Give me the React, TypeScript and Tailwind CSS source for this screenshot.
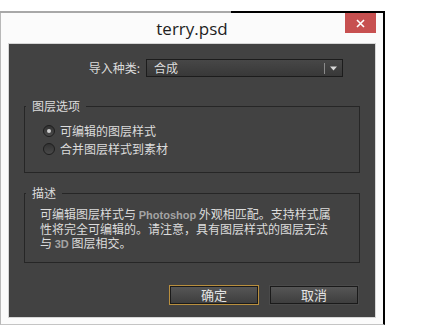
export default function App() {
  const cjk = { fontFamily: '"Noto Sans CJK SC", "Noto Sans", sans-serif' };

  return (
    <div className="w-[446px] h-[336px] bg-white pt-[11px]">
      <div className="w-[385px] flex flex-col">
        <div className="flex h-[2px]">
          <div className="w-[231px] bg-[#a8a8a8]" />
          <div className="flex-1 bg-black" />
        </div>
        <div className="border-l border-l-[#b8b8b8] border-r-2 border-r-black border-b border-b-[#c4c4c4] bg-[#fbfbfb] px-[7px] pb-[6px]">
          {/* title bar */}
          <div className="grid grid-cols-[31px_1fr_31px] h-[30px]">
            <div />
            <div
              className="text-center text-[17px] leading-[22px] pt-[5px] text-[#1e1e1e]"
              style={{ fontFamily: '"Open Sans", "Noto Sans", sans-serif' }}
            >
              terry.psd
            </div>
            <div className="h-[20px] bg-[#c75050] flex items-center justify-center">
              <svg width="9" height="9" viewBox="0 0 9 9">
                <path d="M1 1L8 8M8 1L1 8" stroke="white" strokeWidth="1.6" />
              </svg>
            </div>
          </div>

          {/* panel */}
          <div
            className="h-[275px] bg-[#424242] border border-[#d6d6d6] px-[15px] pt-[15px] text-[12px] text-[#dcdcdc]"
            style={cjk}
          >
            <div className="flex items-center h-[18px]">
              <div className="w-[116px] text-right leading-[18px]">导入种类:</div>
              <div className="ml-[6px] w-[197px] h-[18px] border border-[#1c1c1c] bg-gradient-to-b from-[#474747] to-[#383838] flex items-center">
                <span className="pl-[7px] flex-1 leading-[16px]">合成</span>
                <div className="w-px h-[11px] bg-[#8a8a8a]" />
                <svg width="17" height="16" viewBox="0 0 17 16">
                  <path d="M5 6.5H12L8.5 10.5Z" fill="#d8d8d8" />
                </svg>
              </div>
            </div>

            <fieldset className="mt-[22px] h-[74px] border border-[#262626] px-px">
              <legend className="px-[6px] leading-[14px]">图层选项</legend>
              <div className="pl-[17px] pt-[9px]">
                <div className="flex items-center h-[18px] gap-[5px]">
                  <Radio checked />
                  <span>可编辑的图层样式</span>
                </div>
                <div className="flex items-center h-[18px] gap-[5px]">
                  <Radio />
                  <span>合并图层样式到素材</span>
                </div>
              </div>
            </fieldset>

            <fieldset className="mt-[13px] h-[77px] border border-[#262626] px-px">
              <legend className="px-[6px] leading-[14px]">描述</legend>
              <div className="pl-[14px] pt-[7px] leading-[14px]">
                可编辑图层样式与{" "}
                <span
                  className="text-[11px] font-bold text-[#a4a4a4]"
                  style={{ fontFamily: '"Liberation Sans", sans-serif' }}
                >
                  Photoshop
                </span>{" "}
                外观相匹配。支持样式属
                <br />
                性将完全可编辑的。请注意，具有图层样式的图层无法
                <br />
                与{" "}
                <span
                  className="text-[11px] font-bold text-[#a4a4a4]"
                  style={{ fontFamily: '"Liberation Sans", sans-serif' }}
                >
                  3D
                </span>{" "}
                图层相交。
              </div>
            </fieldset>

            <div className="mt-[22px] flex justify-end gap-[10px] pr-px">
              <button
                type="button"
                className="w-[90px] h-[20px] border border-[#b98f3e] shadow-[inset_0_0_0_1px_#1a1a1a] bg-gradient-to-b from-[#575757] to-[#3d3d3d] text-[13px] leading-[18px] text-[#e4e4e4]"
              >
                确定
              </button>
              <button
                type="button"
                className="w-[90px] h-[20px] border border-[#4a4a4a] shadow-[inset_0_0_0_1px_#1a1a1a] bg-gradient-to-b from-[#575757] to-[#3d3d3d] text-[13px] leading-[18px] text-[#e4e4e4]"
              >
                取消
              </button>
            </div>
          </div>
        </div>
      </div>
    </div>
  );
}

function Radio({ checked = false }: { checked?: boolean }) {
  return (
    <span className="w-[12px] h-[12px] rounded-full border border-[#1e1e1e] bg-gradient-to-b from-[#333333] to-[#4a4a4a] flex items-center justify-center">
      {checked && <span className="w-[4px] h-[4px] rounded-full bg-[#cfcfcf]" />}
    </span>
  );
}
